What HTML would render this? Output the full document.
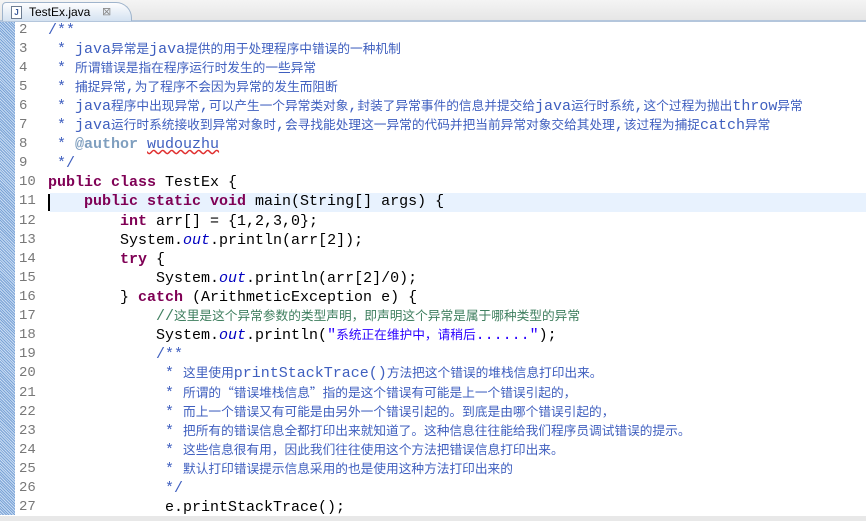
<!DOCTYPE html>
<html><head><meta charset="utf-8"><style>
body{margin:0;width:866px;height:521px;overflow:hidden;background:#fff;position:relative;font-family:"Liberation Mono",monospace}
#bar{position:absolute;left:0;top:0;width:866px;height:20px;background:linear-gradient(#f4f4f4,#e6e6e6);border-bottom:2px solid #b4c6dc;z-index:2}
#tab{position:absolute;left:2px;top:2px;width:128px;height:18px;background:linear-gradient(#fdfdfe,#d4e2f1);border:1px solid #9fb4cc;border-bottom:none;border-radius:4px 16px 0 0}
#tab span{position:absolute;left:26px;top:2px;font:12px "Liberation Sans",sans-serif;color:#000}
#ic{position:absolute;left:8px;top:3px;width:9px;height:11px;border:1px solid #6d7c91;background:#fff;font:bold 8px "Liberation Sans";color:#3a5a9a;text-align:center;line-height:11px}
#x{position:absolute;left:99px;top:2px;font:11px "DejaVu Sans";color:#888}
#gut{position:absolute;left:0;top:22px;width:15px;height:493px;background:repeating-linear-gradient(45deg,#7aa3d6 0 1px,#c9dcf3 1px 2px)}
#hl{position:absolute;left:50px;top:193px;width:816px;height:19px;background:#e8f2fe}
#cur{position:absolute;left:48px;top:194px;width:2px;height:17px;background:#000}
#bot{position:absolute;left:0;top:516px;width:866px;height:5px;background:#e8e8e8}
.col{position:absolute;top:20.5px}
.col div{height:19.12px;line-height:19.12px;white-space:pre;font-size:15px;overflow:visible}
#nums{left:19px}
#nums div{color:#787878;font-size:14px}
#code{left:48px}
.c{font-family:"Noto Sans CJK SC",sans-serif;font-size:12.7px;line-height:1px}
.d{color:#3f5fbf}.k{color:#7f0055;font-weight:bold}.o{color:#0000c0;font-style:italic}.s{color:#2a00ff}.g{color:#3f7f5f}
.a{color:#7f9fbf;font-weight:bold}.w{text-decoration:underline wavy #e03030}
</style></head><body>
<div id="bar"><div id="tab"><div id="ic">J</div><span>TestEx.java</span><div id="x">⊠</div></div></div>
<div id="gut"></div><div id="hl"></div><div id="cur"></div><div id="bot"></div>
<div class="col" id="nums"><div>2</div><div>3</div><div>4</div><div>5</div><div>6</div><div>7</div><div>8</div><div>9</div><div>10</div><div>11</div><div>12</div><div>13</div><div>14</div><div>15</div><div>16</div><div>17</div><div>18</div><div>19</div><div>20</div><div>21</div><div>22</div><div>23</div><div>24</div><div>25</div><div>26</div><div>27</div></div>
<div class="col" id="code">
<div class="d">/**</div>
<div class="d"> * java<span class="c">异常是</span>java<span class="c">提供的用于处理程序中错误的一种机制</span></div>
<div class="d"> * <span class="c">所谓错误是指在程序运行时发生的一些异常</span></div>
<div class="d"> * <span class="c">捕捉异常</span>,<span class="c">为了程序不会因为异常的发生而阻断</span></div>
<div class="d"> * java<span class="c">程序中出现异常</span>,<span class="c">可以产生一个异常类对象</span>,<span class="c">封装了异常事件的信息并提交给</span>java<span class="c">运行时系统</span>,<span class="c">这个过程为抛出</span>throw<span class="c">异常</span></div>
<div class="d"> * java<span class="c">运行时系统接收到异常对象时</span>,<span class="c">会寻找能处理这一异常的代码并把当前异常对象交给其处理</span>,<span class="c">该过程为捕捉</span>catch<span class="c">异常</span></div>
<div class="d"> * <span class="a">@author</span> <span class="w">wudouzhu</span></div>
<div class="d"> */</div>
<div><span class="k">public class</span> TestEx {</div>
<div>    <span class="k">public static void</span> main(String[] args) {</div>
<div>        <span class="k">int</span> arr[] = {1,2,3,0};</div>
<div>        System.<span class="o">out</span>.println(arr[2]);</div>
<div>        <span class="k">try</span> {</div>
<div>            System.<span class="o">out</span>.println(arr[2]/0);</div>
<div>        } <span class="k">catch</span> (ArithmeticException e) {</div>
<div>            <span class="g">//<span class="c">这里是这个异常参数的类型声明，即声明这个异常是属于哪种类型的异常</span></span></div>
<div>            System.<span class="o">out</span>.println(<span class="s">"<span class="c">系统正在维护中，请稍后</span>......"</span>);</div>
<div class="d">            /**</div>
<div class="d">             * <span class="c">这里使用</span>printStackTrace()<span class="c">方法把这个错误的堆栈信息打印出来。</span></div>
<div class="d">             * <span class="c">所谓的“错误堆栈信息”指的是这个错误有可能是上一个错误引起的，</span></div>
<div class="d">             * <span class="c">而上一个错误又有可能是由另外一个错误引起的。到底是由哪个错误引起的，</span></div>
<div class="d">             * <span class="c">把所有的错误信息全都打印出来就知道了。这种信息往往能给我们程序员调试错误的提示。</span></div>
<div class="d">             * <span class="c">这些信息很有用，因此我们往往使用这个方法把错误信息打印出来。</span></div>
<div class="d">             * <span class="c">默认打印错误提示信息采用的也是使用这种方法打印出来的</span></div>
<div class="d">             */</div>
<div>             e.printStackTrace();</div>
</div>
</body></html>
